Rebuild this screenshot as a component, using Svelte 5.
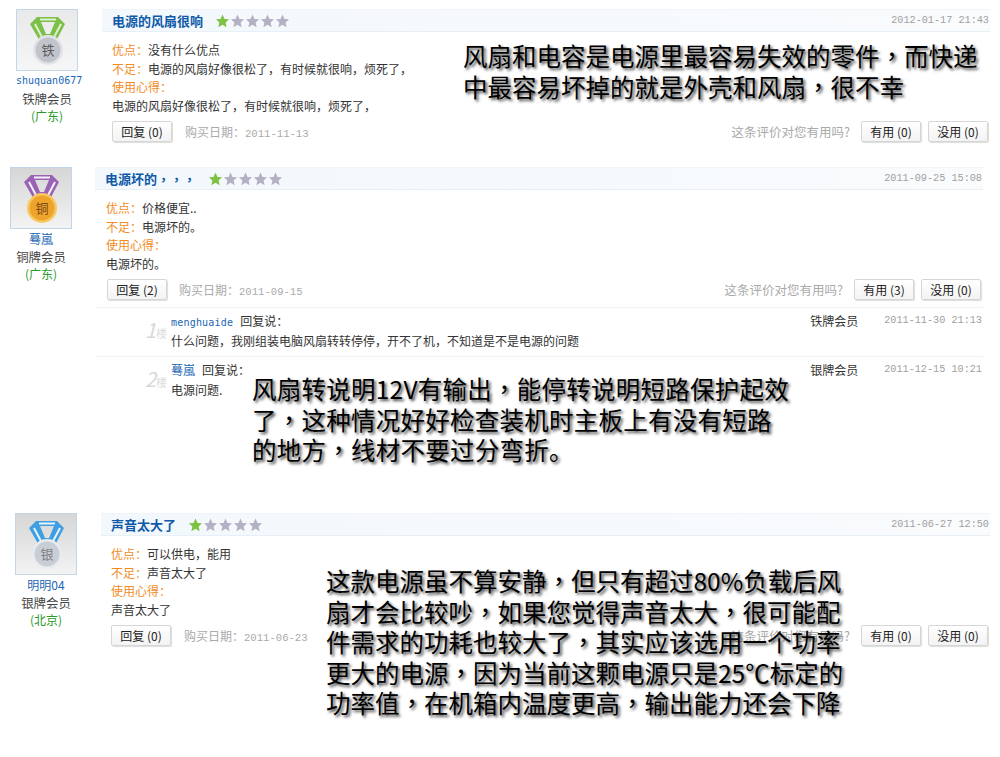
<script>
  const goldStar = 1;

  const reviews = [
    {
      cls: "first",
      medal: "iron",
      name: "shuquan0677",
      latin: true,
      level: "铁牌会员",
      area: "(广东)",
      title: "电源的风扇很响",
      time: "2012-01-17 21:43",
      pros: "没有什么优点",
      cons: "电源的风扇好像很松了，有时候就很响，烦死了，",
      note: "电源的风扇好像很松了，有时候就很响，烦死了，",
      replyCount: 0,
      bought: "2011-11-13",
      useful: 0,
      useless: 0,
      replies: [],
    },
    {
      cls: "second",
      medal: "copper",
      name: "蓦嵐",
      level: "铜牌会员",
      area: "(广东)",
      title: "电源坏的，，，",
      time: "2011-09-25 15:08",
      pros: "价格便宜..",
      cons: "电源坏的。",
      note: "电源坏的。",
      replyCount: 2,
      bought: "2011-09-15",
      useful: 3,
      useless: 0,
      replies: [
        {
          floor: 1,
          name: "menghuaide",
          latin: true,
          text: "什么问题，我刚组装电脑风扇转转停停，开不了机，不知道是不是电源的问题",
          level: "铁牌会员",
          time: "2011-11-30 21:13",
        },
        {
          floor: 2,
          name: "蓦嵐",
          text: "电源问题.",
          level: "银牌会员",
          time: "2011-12-15 10:21",
        },
      ],
    },
    {
      cls: "third",
      medal: "silver",
      name: "明明04",
      level: "银牌会员",
      area: "(北京)",
      title: "声音太大了",
      time: "2011-06-27 12:50",
      pros: "可以供电，能用",
      cons: "声音太大了",
      note: "声音太大了",
      replyCount: 0,
      bought: "2011-06-23",
      useful: 0,
      useless: 0,
      replies: [],
    },
  ];

  const medals = {
    iron: { a: "#7cc04a", b: "#dff0cf", disc: "#c2c4cb", rim: "#e2e3e7", ink: "#5a5a5a", word: "铁" },
    copper: { a: "#9a62b4", b: "#f6f0f9", disc: "#eda32c", rim: "#f7c860", ink: "#7a4a10", word: "铜" },
    silver: { a: "#3f9fe0", b: "#e6f3fc", disc: "#c9ced6", rim: "#e8ebef", ink: "#7d7d7d", word: "银" },
  };

  const notes = [
    { cls: "note-a", lines: ["风扇和电容是电源里最容易失效的零件，而快递", "中最容易坏掉的就是外壳和风扇，很不幸"] },
    { cls: "note-b", lines: ["风扇转说明12V有输出，能停转说明短路保护起效", "了，这种情况好好检查装机时主板上有没有短路", "的地方，线材不要过分弯折。"] },
    {
      cls: "note-c",
      lines: [
        "这款电源虽不算安静，但只有超过80%负载后风",
        "扇才会比较吵，如果您觉得声音太大，很可能配",
        "件需求的功耗也较大了，其实应该选用一个功率",
        "更大的电源，因为当前这颗电源只是25℃标定的",
        "功率值，在机箱内温度更高，输出能力还会下降",
      ],
    },
  ];

  const starPoints = "6,0.5 7.7,4.2 11.6,4.6 8.7,7.3 9.5,11.4 6,9.3 2.5,11.4 3.3,7.3 0.4,4.6 4.3,4.2";
</script>

<div class="page">
  {#each reviews as r}
    {@const m = medals[r.medal]}
    <section class="review {r.cls}">
      <div class="user">
        <div class="avatar">
          <svg width="60" height="60" viewBox="0 0 60 60" aria-hidden="true">
            <path fill-rule="evenodd" d="M20 7 L41 7 L48 14 L38 33 L24 33 L13 14 Z M24 12 L38 12 L33 24 L29 24 Z" fill={m.a} />
            <path d="M18 14 L27 31 M44 14 L35 31 M23 9.5 L39 9.5" stroke={m.b} stroke-width="2" fill="none" />
            <circle cx="31" cy="40" r="15" fill={m.rim} />
            <circle cx="31" cy="40" r="12.5" fill={m.disc} />
            <text x="31" y="45" text-anchor="middle" font-size="13" fill={m.ink} font-family="'Noto Sans CJK SC', sans-serif">{m.word}</text>
          </svg>
        </div>
        <div class="name" class:latin={r.latin}>{r.name}</div>
        <div class="level">{r.level}</div>
        <div class="area">{r.area}</div>
      </div>

      <div class="main">
        <div class="head">
          <span class="title">
            {#each r.title.split("，") as part, i}{#if i > 0}<span class="comma">，</span>{/if}{part}{/each}
          </span>
          <span class="stars">
            {#each [1, 2, 3, 4, 5] as n}
              <svg width="15" height="14" viewBox="0 0 12 12" aria-hidden="true">
                <polygon points={starPoints} fill={n <= goldStar ? "#7dc242" : "#b5b1c4"} />
              </svg>
            {/each}
          </span>
          <span class="time">{r.time}</span>
        </div>

        <div class="body">
          <div class="row"><span class="label">优点：</span>{r.pros}</div>
          <div class="row"><span class="label">不足：</span>{r.cons}</div>
          <div class="row"><span class="label">使用心得：</span></div>
          <div class="row">{r.note}</div>
        </div>

        <div class="actions">
          <button class="btn reply">回复 ({r.replyCount})</button>
          <span class="bought">购买日期：<span class="num">{r.bought}</span></span>
          <span class="ask">这条评价对您有用吗?</span>
          <button class="btn vote">有用 ({r.useful})</button>
          <button class="btn vote">没用 ({r.useless})</button>
        </div>

        {#if r.replies.length}
          <div class="replies">
            {#each r.replies as c}
              <div class="reply-row">
                <div class="floor"><b>{c.floor}</b>楼</div>
                <div class="reply-text">
                  <div class="line"><span class="name" class:latin={c.latin}>{c.name}</span><span class="said">回复说：</span></div>
                  <div class="line">{c.text}</div>
                </div>
                <div class="reply-level">{c.level}</div>
                <div class="time">{c.time}</div>
              </div>
            {/each}
          </div>
        {/if}
      </div>
    </section>
  {/each}

  {#each notes as n}
    <div class="note {n.cls}">
      {#each n.lines as line}
        <div>
          {#each line.split("，") as part, i}{#if i > 0}<span class="comma">，</span>{/if}{part}{/each}
        </div>
      {/each}
    </div>
  {/each}
</div>

<style>
  :global(body) {
    margin: 0;
    background: #fff;
  }

  .page {
    position: relative;
    width: 1000px;
    height: 757px;
    overflow: hidden;
    font-family: "Noto Sans CJK SC", "Liberation Sans", sans-serif;
    font-size: 12px;
    color: #333;
  }

  .review {
    display: flex;
    align-items: flex-start;
    box-sizing: border-box;
  }

  .review.first {
    padding: 9px 10px 0 16px;
    height: 167px;
  }

  .review.second {
    padding: 0 17px 0 10px;
    height: 346px;
  }

  .review.third {
    padding: 0 10px 0 15px;
  }

  .user {
    width: 62px;
    flex: none;
    text-align: center;
    line-height: 18px;
  }

  .avatar {
    width: 60px;
    height: 60px;
    border: 1px solid #c3d6e8;
    background: linear-gradient(#e9e9e9, #f6f6f6);
    margin-bottom: 1px;
  }

  .avatar svg {
    display: block;
  }

  .second .avatar,
  .third .avatar {
    background: linear-gradient(#d6d6d6, #f3f3f3);
  }

  .name {
    color: #1a66b3;
  }

  .name.latin {
    font-family: "DejaVu Sans Mono", monospace;
    font-size: 10px;
    line-height: 1;
  }

  .user .name {
    white-space: nowrap;
    line-height: 18px;
  }

  .reply-text .name.latin {
    letter-spacing: 0.2px;
  }

  .level {
    font-size: 12.4px;
    color: #444;
  }

  .area {
    margin-top: -1px;
    color: #2a9a2a;
  }

  .main {
    flex: 1;
    min-width: 0;
    margin-left: 24px;
  }

  .second .main {
    margin-left: 23px;
  }

  .head {
    display: flex;
    align-items: center;
    height: 23px;
    padding: 0 1px 0 10px;
    background: linear-gradient(90deg, #f3f8fc, #f9fbfd);
    border-top: 1px solid #f0f4f8;
    border-bottom: 1px solid #e8f0f7;
    box-sizing: border-box;
  }

  .title {
    font-size: 13px;
    color: #0f5aa8;
    font-weight: 700;
    text-spacing-trim: space-all;
  }

  .stars {
    display: flex;
    margin-left: 12px;
  }

  .head .time {
    margin-left: auto;
  }

  .time {
    font-family: "Liberation Mono", monospace;
    font-size: 10.2px;
    color: #a0a0a0;
    white-space: pre;
  }

  .body {
    padding: 9px 10px 0;
    line-height: 18.5px;
    color: #333;
  }

  .second .body {
    padding-left: 11px;
  }

  .label {
    color: #f28c1e;
  }

  .actions {
    display: flex;
    align-items: center;
    gap: 7px;
    padding: 6px 2px 0 10px;
  }

  .second .actions {
    padding-left: 12px;
  }

  .btn {
    height: 21px;
    padding: 0;
    font: inherit;
    font-size: 12px;
    color: #222;
    background: linear-gradient(#fff, #f3f3f3);
    border: 1px solid #d6d6d6;
    border-radius: 2px;
    box-shadow: 1px 1px 1px #ddd;
  }

  .reply {
    width: 60px;
  }

  .vote {
    width: 60px;
  }

  .bought {
    margin-left: 6px;
    color: #aaa;
  }

  .second .bought {
    margin-left: 5px;
  }

  .num {
    font-family: "Liberation Mono", monospace;
    font-size: 10.6px;
  }

  .ask {
    margin-left: auto;
    margin-right: 4px;
    font-size: 12.5px;
    color: #aaa;
  }

  .replies {
    margin-top: 7px;
    border-top: 1px solid #eef0f3;
  }

  .reply-row {
    display: flex;
    align-items: flex-start;
    height: 49px;
    border-bottom: 1px solid #eef0f3;
    box-sizing: border-box;
  }

  .reply-row + .reply-row {
    border-bottom: none;
  }

  .floor {
    width: 72px;
    margin-top: 7px;
    text-align: right;
    font-size: 11px;
    color: #ddd;
    flex: none;
  }

  .floor b {
    font-size: 20px;
    font-weight: 400;
    font-style: italic;
    color: #d8d8d8;
  }

  .reply-text {
    flex: 1;
    padding-left: 4px;
    margin-top: 3px;
  }

  .line {
    height: 20px;
    line-height: 20px;
  }

  .said {
    margin-left: 7px;
  }

  .reply-level {
    width: 74px;
    line-height: 20px;
    margin-top: 3px;
    color: #333;
  }

  .reply-row .time {
    line-height: 20px;
    margin-top: 3px;
    padding-right: 1px;
  }

  /* 上面盖着的黑色批注 */
  .note {
    position: absolute;
    font-size: 24.5px;
    font-weight: 400;
    line-height: 30.6px;
    color: #000;
    white-space: nowrap;
    text-shadow: 2px 2px 3px rgba(0, 0, 0, 0.75);
  }

  .comma {
    font-family: "Noto Sans CJK TC", sans-serif;
  }

  .note-a {
    left: 463px;
    top: 41px;
  }

  .note-b {
    left: 252px;
    top: 374px;
    letter-spacing: 0.25px;
  }

  .note-c {
    left: 326px;
    top: 566px;
  }
</style>
